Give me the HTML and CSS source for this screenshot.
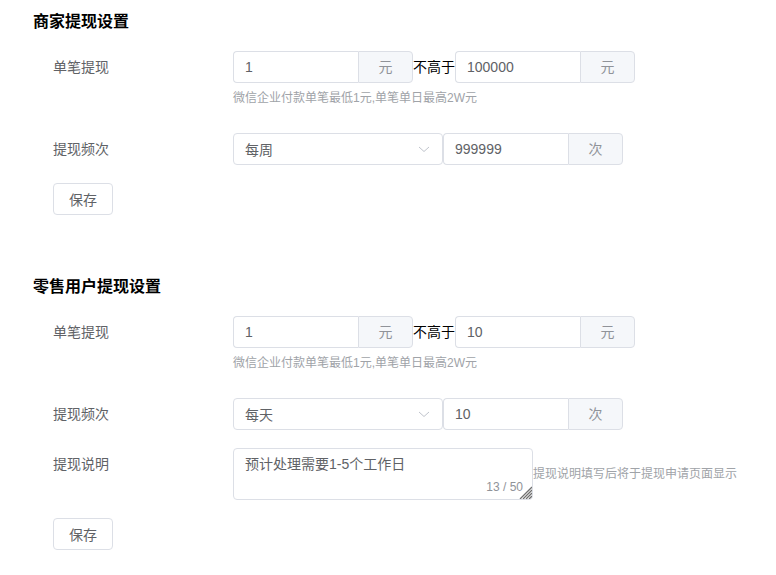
FILE: index.html
```html
<!DOCTYPE html>
<html lang="zh-CN">
<head>
<meta charset="utf-8">
<title>提现设置</title>
<link rel="stylesheet" href="styles.css">
</head>
<body>
<div class="page">
  <section class="section">
    <h2 class="title">商家提现设置</h2>
    <div class="form">
      <div class="item item-hint">
        <label class="label">单笔提现</label>
        <div class="content">
          <div class="line">
            <div class="group"><input class="field" value="1"><span class="addon">元</span></div>
            <span class="between">不高于</span>
            <div class="group"><input class="field" value="100000"><span class="addon">元</span></div>
          </div>
          <div class="hint">微信企业付款单笔最低1元,单笔单日最高2W元</div>
        </div>
      </div>
      <div class="item">
        <label class="label">提现频次</label>
        <div class="content">
          <div class="line">
            <div class="select"><span class="select-text">每周</span><svg class="arrow" width="12" height="7" viewBox="0 0 12 7"><path d="M1 1 L6 5.5 L11 1" fill="none" stroke="#c0c4cc" stroke-width="1"/></svg></div>
            <div class="group"><input class="field" value="999999"><span class="addon">次</span></div>
          </div>
        </div>
      </div>
      <div class="item item-btn">
        <button class="btn">保存</button>
      </div>
    </div>
  </section>

  <section class="section section-2">
    <h2 class="title">零售用户提现设置</h2>
    <div class="form">
      <div class="item item-hint">
        <label class="label">单笔提现</label>
        <div class="content">
          <div class="line">
            <div class="group"><input class="field" value="1"><span class="addon">元</span></div>
            <span class="between">不高于</span>
            <div class="group"><input class="field" value="10"><span class="addon">元</span></div>
          </div>
          <div class="hint">微信企业付款单笔最低1元,单笔单日最高2W元</div>
        </div>
      </div>
      <div class="item">
        <label class="label">提现频次</label>
        <div class="content">
          <div class="line">
            <div class="select"><span class="select-text">每天</span><svg class="arrow" width="12" height="7" viewBox="0 0 12 7"><path d="M1 1 L6 5.5 L11 1" fill="none" stroke="#c0c4cc" stroke-width="1"/></svg></div>
            <div class="group"><input class="field" value="10"><span class="addon">次</span></div>
          </div>
        </div>
      </div>
      <div class="item">
        <label class="label">提现说明</label>
        <div class="content">
          <div class="line line-top">
            <div class="textarea-wrap">
              <textarea class="textarea">预计处理需要1-5个工作日</textarea>
              <span class="count">13 / 50</span>
              <svg class="grabber" width="13" height="13" viewBox="0 0 13 13"><g stroke="#6f6f6f" stroke-width="1.3"><path d="M1 13 L13 1"/><path d="M4 13 L13 4"/><path d="M7 13 L13 7"/><path d="M10 13 L13 10"/></g></svg>
            </div>
            <span class="side-hint">提现说明填写后将于提现申请页面显示</span>
          </div>
        </div>
      </div>
      <div class="item item-btn">
        <button class="btn">保存</button>
      </div>
    </div>
  </section>
</div>
</body>
</html>
```
FILE: styles.css
```css
* { box-sizing: border-box; }
html, body { margin: 0; padding: 0; background: #fff; }
body {
  font-family: "Liberation Sans", "Noto Sans CJK SC", sans-serif;
  font-size: 14px;
  color: #606266;
}
.page { padding: 11px 0 0 33px; }
.title {
  margin: 0;
  font-size: 16px;
  line-height: 22px;
  font-weight: bold;
  color: #000;
}
.section-2 { margin-top: 61px; }
.form { padding: 18px 0 0 20px; }
.item { display: flex; margin-bottom: 18px; }
.item-hint { margin-bottom: 26px; }
.item-btn { margin-bottom: 0; }
.label {
  width: 180px;
  flex: none;
  line-height: 32px;
  color: #606266;
}
.content { display: flex; flex-direction: column; }
.line { display: flex; align-items: center; }
.group {
  display: flex;
  width: 180px;
  height: 32px;
}
.field {
  flex: 1;
  min-width: 0;
  height: 32px;
  margin: 0;
  padding: 0 11px;
  border: 1px solid #dcdfe6;
  border-right: none;
  border-radius: 4px 0 0 4px;
  font: inherit;
  font-size: 14px;
  color: #606266;
  outline: none;
  background: #fff;
}
.addon {
  flex: none;
  width: 55px;
  height: 32px;
  line-height: 30px;
  text-align: center;
  background: #f5f7fa;
  border: 1px solid #dcdfe6;
  border-radius: 0 4px 4px 0;
  color: #909399;
}
.between { color: #000; line-height: 32px; }
.hint {
  margin-top: 6px;
  font-size: 12px;
  line-height: 18px;
  color: #a0a3a8;
}
.select {
  width: 210px;
  height: 32px;
  border: 1px solid #dcdfe6;
  border-radius: 4px;
  display: flex;
  align-items: center;
  justify-content: space-between;
  padding: 0 12px 0 11px;
  color: #606266;
}
.arrow { display: block; }
.line-top { align-items: center; }
.textarea-wrap { position: relative; width: 300px; height: 52px; }
.textarea {
  display: block;
  width: 300px;
  height: 52px;
  margin: 0;
  padding: 5px 11px;
  border: 1px solid #dcdfe6;
  border-radius: 4px;
  font: inherit;
  font-size: 14px;
  line-height: 21px;
  color: #606266;
  resize: none;
  outline: none;
}
.count {
  position: absolute;
  right: 10px;
  bottom: 6px;
  font-size: 12px;
  line-height: 14px;
  color: #909399;
  background: #fff;
}
.grabber {
  position: absolute;
  right: 1px;
  bottom: 1px;
  display: block;
}
.side-hint {
  font-size: 12px;
  color: #a0a3a8;
  line-height: 18px;
}
.btn {
  width: 60px;
  height: 32px;
  margin: 0;
  padding: 0;
  border: 1px solid #dcdfe6;
  border-radius: 4px;
  background: #fff;
  font: inherit;
  font-size: 14px;
  color: #606266;
  cursor: pointer;
}
```
